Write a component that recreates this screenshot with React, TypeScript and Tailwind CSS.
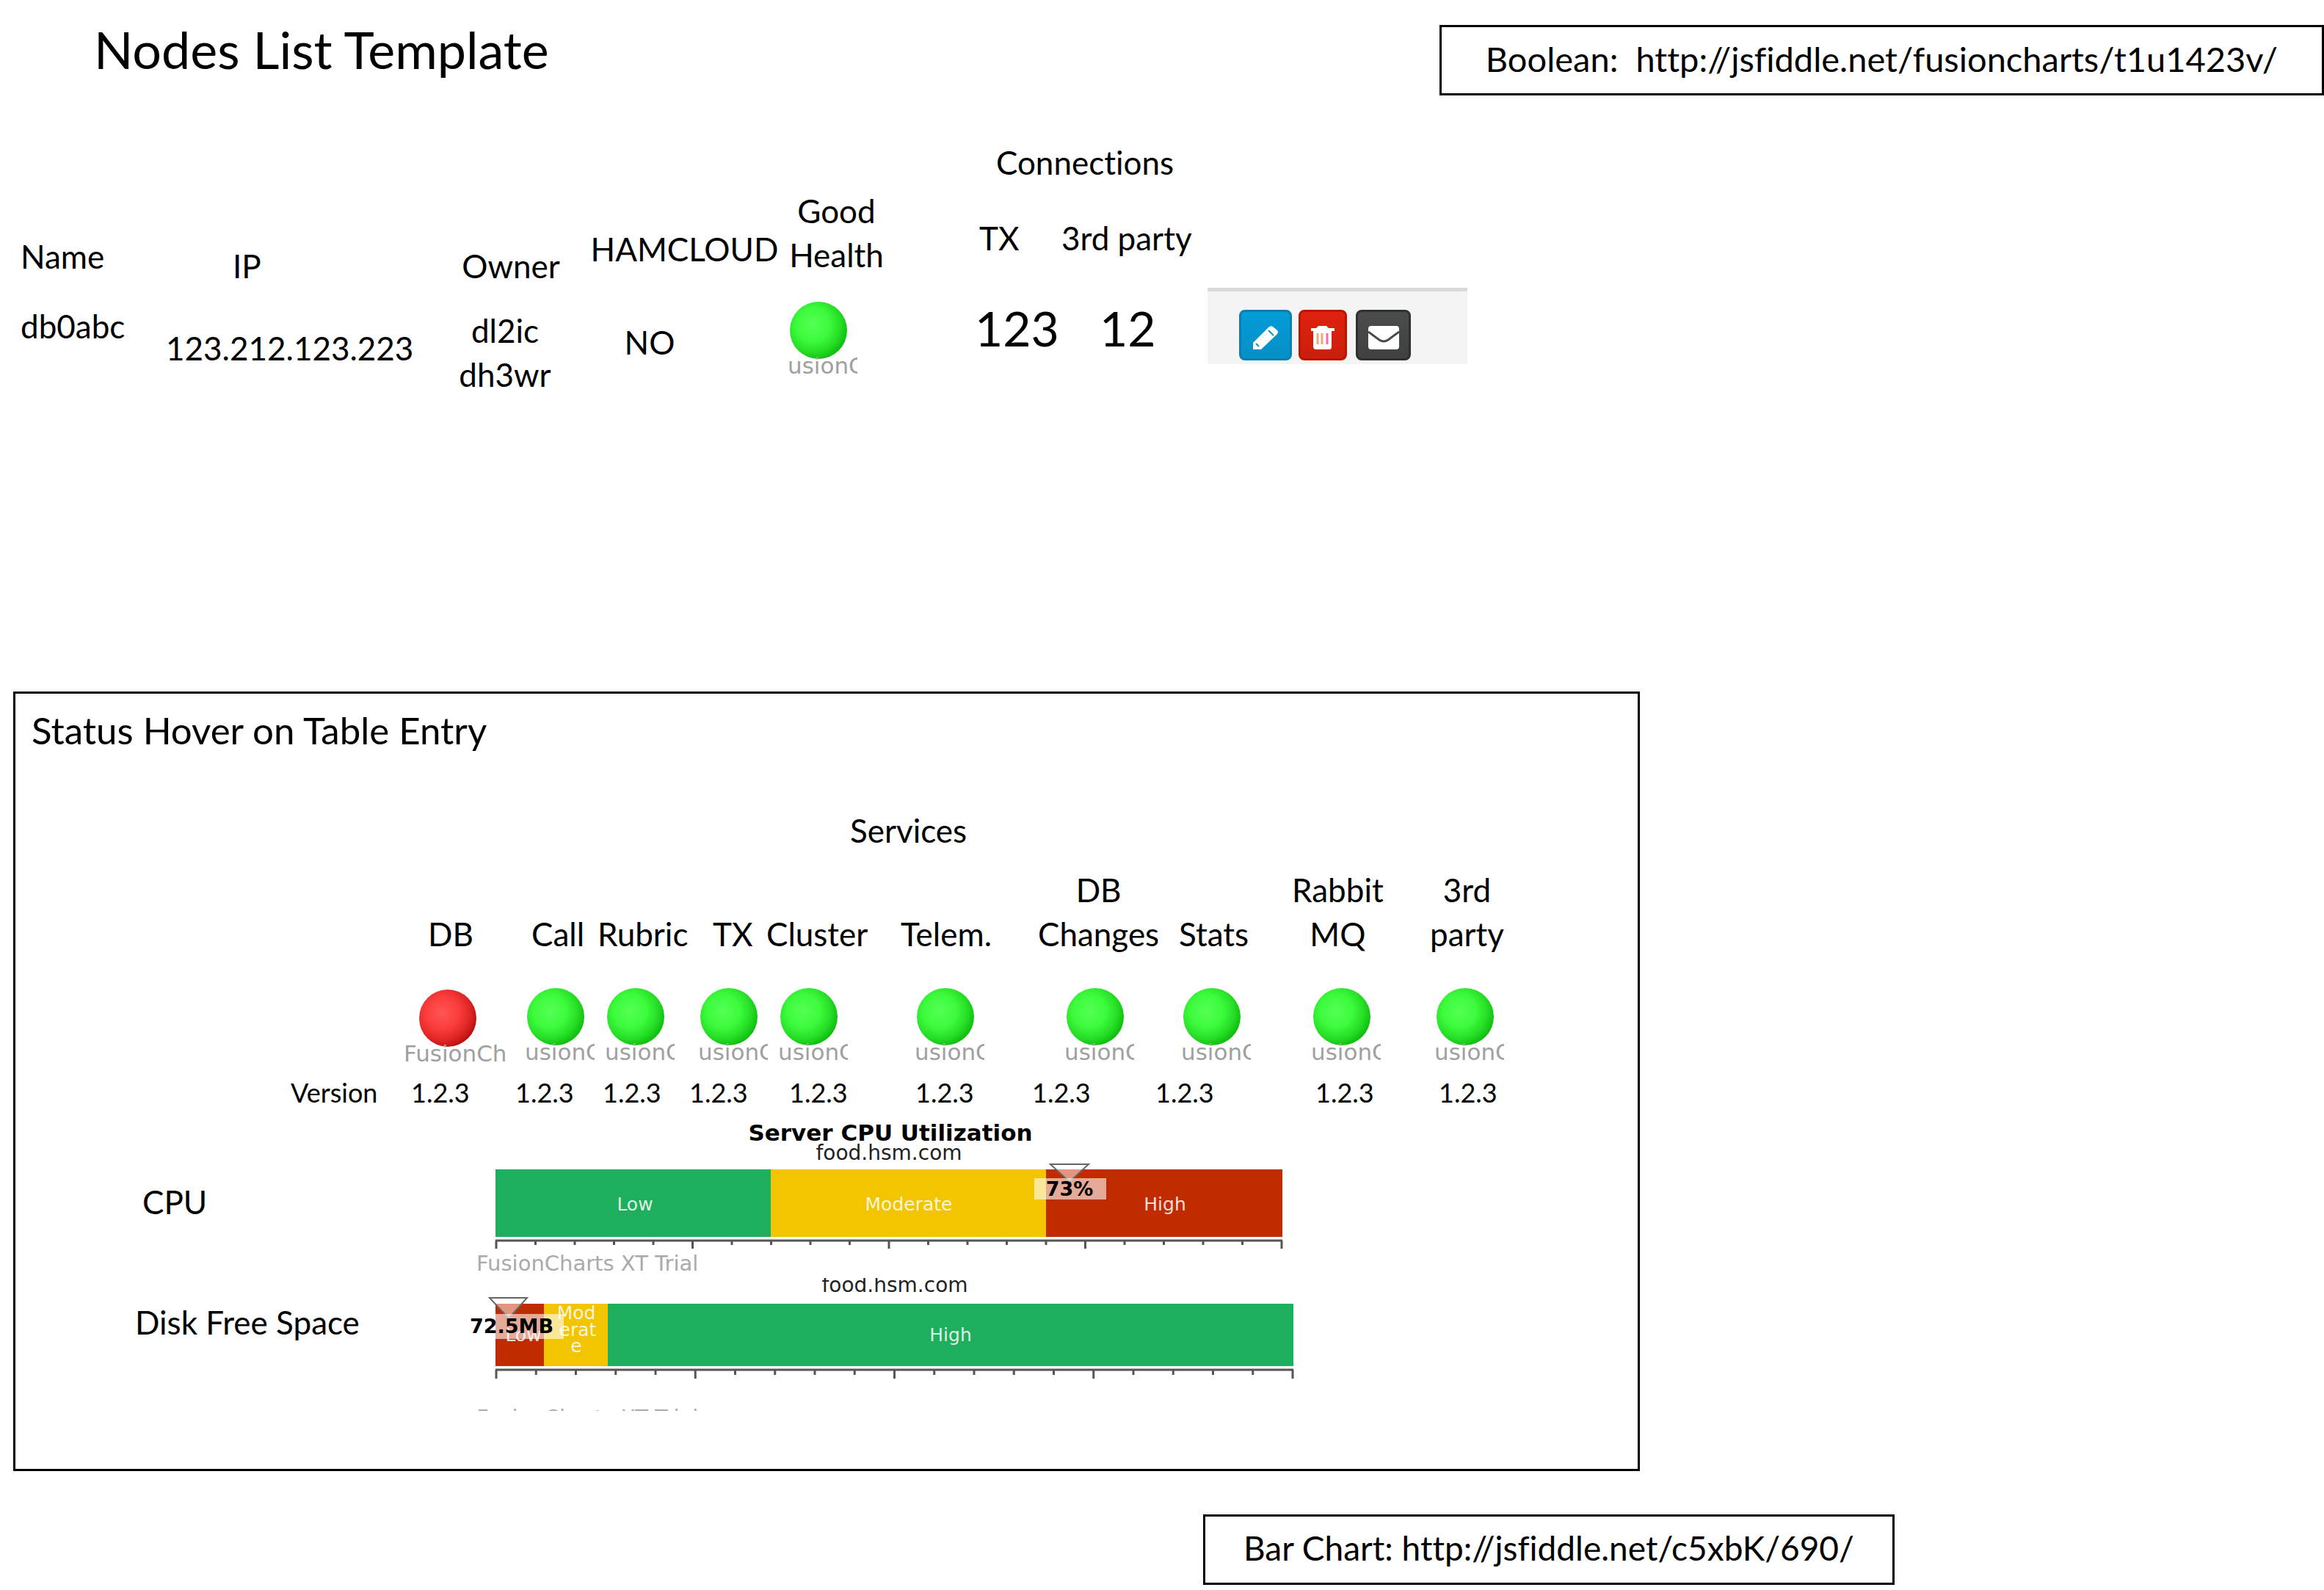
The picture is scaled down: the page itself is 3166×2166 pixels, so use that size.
import React from 'react';

type Service = {
  label: string[];
  ok: boolean;
  version: string;
  col: string;
  labelPad: string;
  ledPad: string;
  versionPad: string;
};

const services: Service[] = [
  { label: ['DB'], ok: false, version: '1.2.3', col: 'w-[160px]', labelPad: 'pl-[43px]', ledPad: 'pl-[11px]', versionPad: 'pl-5' },
  { label: ['Call'], ok: true, version: '1.2.3', col: 'w-[110px]', labelPad: 'pl-6', ledPad: 'pl-[11px]', versionPad: 'pl-0.5' },
  { label: ['Rubric'], ok: true, version: '1.2.3', col: 'w-[125px]', labelPad: 'pl-1', ledPad: 'pl-[10px]', versionPad: 'pl-[11px]' },
  { label: ['TX'], ok: true, version: '1.2.3', col: 'w-[105px]', labelPad: 'pl-9', ledPad: 'pl-[12px]', versionPad: 'pl-1' },
  { label: ['Cluster'], ok: true, version: '1.2.3', col: 'w-[155px]', labelPad: 'pl-1', ledPad: 'pl-[16px]', versionPad: 'pl-[35px]' },
  { label: ['Telem.'], ok: true, version: '1.2.3', col: 'w-[195px]', labelPad: 'pl-8', ledPad: 'pl-[47px]', versionPad: 'pl-[52px]' },
  { label: ['DB', 'Changes'], ok: true, version: '1.2.3', col: 'w-[180px]', labelPad: 'pl-6', ledPad: 'pl-[56px]', versionPad: 'pl-4' },
  { label: ['Stats'], ok: true, version: '1.2.3', col: 'w-[150px]', labelPad: 'pl-9', ledPad: 'pl-[35px]', versionPad: 'pl-1' },
  { label: ['Rabbit', 'MQ'], ok: true, version: '1.2.3', col: 'w-[180px]', labelPad: 'pl-10', ledPad: 'pl-[62px]', versionPad: 'pl-[72px]' },
  { label: ['3rd', 'party'], ok: true, version: '1.2.3', col: 'w-[160px]', labelPad: 'pl-12', ledPad: 'pl-[50px]', versionPad: 'pl-[60px]' },
];

const chartFont = '"DejaVu Sans", Verdana, sans-serif';

function Gradients() {
  return (
    <svg className="absolute size-0" aria-hidden="true">
      <defs>
        <radialGradient id="led-green" cx="0.4" cy="0.4" r="0.65">
          <stop offset="0" stopColor="#55ff55" />
          <stop offset="0.45" stopColor="#3cfb3c" />
          <stop offset="0.75" stopColor="#26dd26" />
          <stop offset="1" stopColor="#0cb80c" />
        </radialGradient>
        <radialGradient id="led-red" cx="0.4" cy="0.4" r="0.65">
          <stop offset="0" stopColor="#ff5555" />
          <stop offset="0.45" stopColor="#fb3c3c" />
          <stop offset="0.75" stopColor="#df2626" />
          <stop offset="1" stopColor="#b80c0c" />
        </radialGradient>
      </defs>
    </svg>
  );
}

function Led({ ok }: { ok: boolean }) {
  if (!ok) {
    return (
      <svg width="138" height="104" role="img" aria-label="Down" className="block overflow-hidden">
        <circle cx="59" cy="42" r="39" fill="url(#led-red)" />
        <text x="-1" y="101" fontSize="31" fill="#a0a0a0" fontFamily={chartFont}>FusionCh</text>
      </svg>
    );
  }
  return (
    <svg width="99" height="104" role="img" aria-label="Up" className="block overflow-hidden">
      <circle cx="46" cy="40" r="39" fill="url(#led-green)" />
      <text x="4" y="99" fontSize="31" fill="#a0a0a0" fontFamily={chartFont}>usionC</text>
    </svg>
  );
}

function Axis({ x, y, width, major, minor }: { x: number; y: number; width: number; major: number; minor: number }) {
  const ticks = Array.from({ length: 21 }, (_, i) => i);
  return (
    <g stroke="#555555" strokeWidth="3">
      <line x1={x} x2={x + width} y1={y} y2={y} />
      {ticks.map((i) => {
        const tx = x + 1 + ((width - 2) * i) / 20;
        return <line key={i} x1={tx} x2={tx} y1={y} y2={y + (i % 5 === 0 ? major : minor)} />;
      })}
    </g>
  );
}

function CpuChart() {
  return (
    <svg width="1160" height="211" role="img" aria-label="Server CPU Utilization" fontFamily={chartFont} className="block overflow-hidden">
      <text x="583" y="24" fontSize="31" fontWeight="700" textAnchor="middle">Server CPU Utilization</text>
      <text x="581" y="50" fontSize="28" fill="#222222" textAnchor="middle">food.hsm.com</text>
      <rect x="45" y="63" width="375" height="92" fill="#1eaf5e" />
      <rect x="420" y="63" width="375" height="92" fill="#f2c500" />
      <rect x="795" y="63" width="322" height="92" fill="#c02c00" />
      <g fontSize="25" fill="#ffffff" fillOpacity="0.85" textAnchor="middle">
        <text x="235" y="119">Low</text>
        <text x="608" y="119">Moderate</text>
        <text x="957" y="119">High</text>
      </g>
      <path d="M801 56H853L827 80Z" fill="#ffffff" fillOpacity="0.5" stroke="#666666" strokeWidth="2" />
      <rect x="779" y="75" width="98" height="29" fill="#ffffff" fillOpacity="0.6" />
      <text x="827" y="99" fontSize="27" fontWeight="700" textAnchor="middle">73%</text>
      <Axis x={45} y={160} width={1072} major={11} minor={6} />
      <text x="19" y="201" fontSize="29" fill="#aaaaaa">FusionCharts XT Trial</text>
    </svg>
  );
}

function DiskChart() {
  return (
    <svg width="1160" height="181" role="img" aria-label="Disk free space" fontFamily={chartFont} className="block overflow-hidden">
      <text x="589" y="19" fontSize="28" fill="#222222" textAnchor="middle">food.hsm.com</text>
      <rect x="45" y="35" width="66" height="85" fill="#c02c00" />
      <rect x="111" y="35" width="87" height="85" fill="#f2c500" />
      <rect x="198" y="35" width="934" height="85" fill="#1eaf5e" />
      <g fontSize="25" fill="#ffffff" fillOpacity="0.85" textAnchor="middle">
        <text x="83" y="86">Low</text>
        <text x="155" y="56">Mod</text>
        <text x="157" y="79">erat</text>
        <text x="155" y="101">e</text>
        <text x="665" y="86">High</text>
      </g>
      <path d="M37 27H88L63 55Z" fill="#ffffff" fillOpacity="0.5" stroke="#666666" strokeWidth="2" />
      <rect x="45" y="49" width="93" height="34" fill="#ffffff" fillOpacity="0.6" />
      <text x="67" y="75" fontSize="27" fontWeight="700" textAnchor="middle">72.5MB</text>
      <Axis x={45} y={125} width={1087} major={12} minor={7} />
      <text x="19" y="200" fontSize="29" fill="#aaaaaa">FusionCharts XT Trial</text>
    </svg>
  );
}

function PencilIcon() {
  return (
    <svg width="36" height="34" viewBox="0 0 36 34" aria-hidden="true">
      <path d="M1 33V24L22 3Q25 0 28 2L34 7Q36 9 34 12L12 33Z" fill="#fff" />
      <path d="M22 7L29 14M5 25L9 29" stroke="#0f8fca" strokeWidth="2" fill="none" />
      <path d="M11 20L20 11" stroke="#9fd4ee" strokeWidth="1" strokeDasharray="2 2" fill="none" />
    </svg>
  );
}

function TrashIcon() {
  return (
    <svg width="34" height="34" viewBox="0 0 34 34" aria-hidden="true">
      <path d="M1 4H8L11 1H22L25 4H33V8H29V29Q29 33 26 33H8Q4 33 4 29V8H1Z" fill="#fff" />
      <path d="M10 11V26M16 11V26" stroke="#f0a878" strokeWidth="3" />
      <path d="M23 11V26" stroke="#ee6fb0" strokeWidth="3" />
    </svg>
  );
}

function MailIcon() {
  return (
    <svg width="42" height="34" viewBox="0 0 42 34" aria-hidden="true">
      <rect x="0" y="1" width="42" height="32" rx="4" fill="#fff" />
      <path d="M0 9L15 20Q21 24 27 20L42 9" stroke="#4a4a4a" strokeWidth="3" fill="none" />
    </svg>
  );
}

export default function App() {
  return (
    <div className="min-h-screen bg-white pb-2 font-['Lato',sans-serif] text-[44px] leading-[60px] text-black [font-variant-ligatures:none]">
      <Gradients />
      <header className="flex items-start justify-between pt-[27px]">
        <h1 className="pl-[128px] text-[70px] leading-[80px]">Nodes List Template</h1>
        <a href="http://jsfiddle.net/fusioncharts/t1u1423v/" className="mt-[7px] block border-3 border-black px-[60px] pt-[13px] pb-[17px] text-[47px] whitespace-pre">
          {'Boolean:  http://jsfiddle.net/fusioncharts/t1u1423v/'}
        </a>
      </header>

      <table className="mt-[61px] ml-5 w-[1979px] table-fixed border-collapse text-left whitespace-nowrap">
        <colgroup>
          <col className="w-[180px]" />
          <col className="w-[400px]" />
          <col className="w-[200px]" />
          <col className="w-[265px]" />
          <col className="w-[149px]" />
          <col className="w-[226px]" />
          <col className="w-[205px]" />
          <col className="w-[354px]" />
        </colgroup>
        <thead className="align-bottom">
          <tr>
            <th rowSpan={2} className="pb-[13px] pl-2 font-normal">Name</th>
            <th rowSpan={2} className="pl-[117px] font-normal">IP</th>
            <th rowSpan={2} className="pr-2 text-center font-normal">Owner</th>
            <th rowSpan={2} className="pb-[23px] text-center font-normal">HAMCLOUD</th>
            <th rowSpan={2} className="pb-[15px] text-center font-normal">Good<br />Health</th>
            <th colSpan={2} className="pl-[97px] text-center font-normal">Connections</th>
            <td rowSpan={2} />
          </tr>
          <tr>
            <th className="pt-[43px] pb-[38px] pl-[120px] font-normal">TX</th>
            <th className="pt-[43px] pb-[38px] pl-1.5 font-normal">3rd party</th>
          </tr>
        </thead>
        <tbody className="align-top">
          <tr>
            <td className="pt-[22px] pl-2">db0abc</td>
            <td className="pt-[52px] pl-[26px]">123.212.123.223</td>
            <td className="pt-7 pr-[24px] text-center">dl2ic<br />dh3wr</td>
            <td className="pt-11 pr-[95px] text-center">NO</td>
            <td className="pt-[18px] pl-1"><Led ok /></td>
            <td className="pt-[15px] pl-[114px] text-[66px] leading-[80px]">123</td>
            <td className="pt-[15px] pl-[58px] text-[66px] leading-[80px]">12</td>
            <td>
              <div className="flex h-[104px] items-end border-t-5 border-[#dadada] bg-[#f4f4f4] pb-[5px] pl-[43px]">
                <button type="button" aria-label="Edit" className="grid h-[69px] w-[72px] place-items-center rounded-lg border-3 border-[#0a7fb0] bg-linear-to-b from-[#049cd8] to-[#058fc6] pt-1.5"><PencilIcon /></button>
                <button type="button" aria-label="Delete" className="ml-[9px] grid h-[69px] w-[66px] place-items-center rounded-lg border-3 border-[#bd1400] bg-linear-to-b from-[#e0220e] to-[#c91f0d] pt-1.5"><TrashIcon /></button>
                <button type="button" aria-label="Send mail" className="ml-3 grid h-[69px] w-[75px] place-items-center rounded-lg border-3 border-[#2e2f2f] bg-linear-to-b from-[#4b4d4d] to-[#3f4141] pt-1.5"><MailIcon /></button>
              </div>
            </td>
          </tr>
        </tbody>
      </table>

      <section className="mt-[402px] ml-[18px] w-[70%] border-3 border-black pt-5 pb-[79px]">
        <h2 className="pl-[22px] text-[51px]">Status Hover on Table Entry</h2>
        <table className="mt-[76px] ml-[359px] w-[1680px] table-fixed border-collapse text-left whitespace-nowrap">
          <caption className="pb-[21px] pl-[778px] text-left">Services</caption>
          <colgroup>
            <col className="w-[160px]" />
            {services.map((s, i) => <col key={i} className={s.col} />)}
          </colgroup>
          <thead className="align-bottom">
            <tr>
              <td />
              {services.map((s, i) => (
                <th key={i} className={`font-normal ${s.labelPad}`}>
                  <div className="w-fit text-center">
                    {s.label.map((line) => <div key={line}>{line}</div>)}
                  </div>
                </th>
              ))}
            </tr>
          </thead>
          <tbody className="align-top">
            <tr>
              <td />
              {services.map((s, i) => (
                <td key={i} className={`pt-[43px] ${s.ledPad}`}><Led ok={s.ok} /></td>
              ))}
            </tr>
            <tr className="text-[36px] leading-[48px]">
              <th className="pt-[15px] pl-4 font-normal">Version</th>
              {services.map((s, i) => (
                <td key={i} className={`pt-[15px] ${s.versionPad}`}>{s.version}</td>
              ))}
            </tr>
          </tbody>
        </table>

        <div className="mt-[18px] flex">
          <h3 className="w-[609px] pt-[77px] pl-[173px]">CPU</h3>
          <CpuChart />
        </div>
        <div className="flex">
          <h3 className="w-[609px] pt-[30px] pl-[163px]">Disk Free Space</h3>
          <DiskChart />
        </div>
      </section>

      <a href="http://jsfiddle.net/c5xbK/690/" className="mt-[59px] ml-[1639px] block w-fit border-3 border-black px-[52px] pt-[13px] pb-[17px] text-[46px]">
        Bar Chart: http://jsfiddle.net/c5xbK/690/
      </a>
    </div>
  );
}
